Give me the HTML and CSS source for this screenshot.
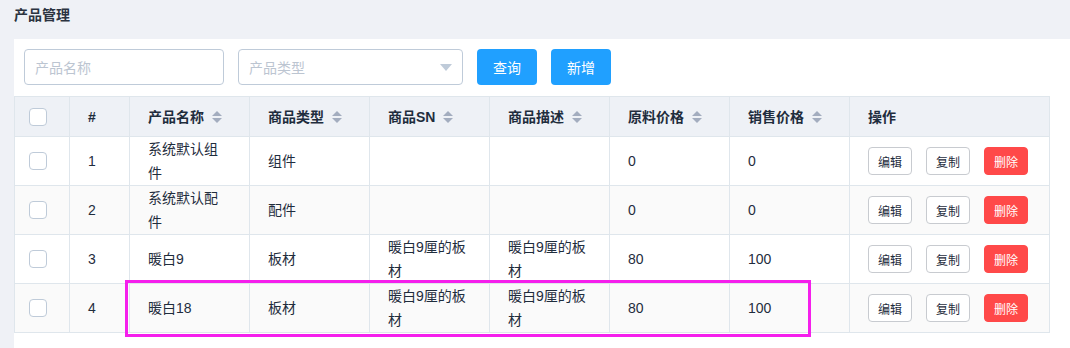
FILE: index.html
```html
<!DOCTYPE html>
<html lang="zh">
<head>
<meta charset="utf-8">
<title>产品管理</title>
<link rel="stylesheet" href="styles.css">
</head>
<body>
<div class="title">产品管理</div>
<div class="card">
  <div class="toolbar">
    <div class="input"><span class="ph">产品名称</span></div>
    <div class="input select"><span class="ph">产品类型</span><span class="caret"></span></div>
    <button class="btn-primary">查询</button>
    <button class="btn-primary">新增</button>
  </div>
  <div class="table">
    <div class="row head">
      <div class="c c-check"><span class="checkbox"></span></div>
      <div class="c">#</div>
      <div class="c">产品名称<span class="sort"><i class="up"></i><i class="down"></i></span></div>
      <div class="c">商品类型<span class="sort"><i class="up"></i><i class="down"></i></span></div>
      <div class="c">商品SN<span class="sort"><i class="up"></i><i class="down"></i></span></div>
      <div class="c">商品描述<span class="sort"><i class="up"></i><i class="down"></i></span></div>
      <div class="c">原料价格<span class="sort"><i class="up"></i><i class="down"></i></span></div>
      <div class="c">销售价格<span class="sort"><i class="up"></i><i class="down"></i></span></div>
      <div class="c">操作</div>
    </div>
    <div class="row">
      <div class="c c-check"><span class="checkbox"></span></div>
      <div class="c">1</div>
      <div class="c">系统默认组件</div>
      <div class="c">组件</div>
      <div class="c"></div>
      <div class="c"></div>
      <div class="c">0</div>
      <div class="c">0</div>
      <div class="c ops"><button class="btn-s">编辑</button><button class="btn-s">复制</button><button class="btn-s danger">删除</button></div>
    </div>
    <div class="row striped">
      <div class="c c-check"><span class="checkbox"></span></div>
      <div class="c">2</div>
      <div class="c">系统默认配件</div>
      <div class="c">配件</div>
      <div class="c"></div>
      <div class="c"></div>
      <div class="c">0</div>
      <div class="c">0</div>
      <div class="c ops"><button class="btn-s">编辑</button><button class="btn-s">复制</button><button class="btn-s danger">删除</button></div>
    </div>
    <div class="row">
      <div class="c c-check"><span class="checkbox"></span></div>
      <div class="c">3</div>
      <div class="c">暖白9</div>
      <div class="c">板材</div>
      <div class="c">暖白9厘的板材</div>
      <div class="c">暖白9厘的板材</div>
      <div class="c">80</div>
      <div class="c">100</div>
      <div class="c ops"><button class="btn-s">编辑</button><button class="btn-s">复制</button><button class="btn-s danger">删除</button></div>
    </div>
    <div class="row striped">
      <div class="c c-check"><span class="checkbox"></span></div>
      <div class="c">4</div>
      <div class="c">暖白18</div>
      <div class="c">板材</div>
      <div class="c">暖白9厘的板材</div>
      <div class="c">暖白9厘的板材</div>
      <div class="c">80</div>
      <div class="c">100</div>
      <div class="c ops"><button class="btn-s">编辑</button><button class="btn-s">复制</button><button class="btn-s danger">删除</button></div>
    </div>
    <div class="highlight"></div>
  </div>
</div>
</body>
</html>
```
FILE: styles.css
```css
* { box-sizing: border-box; }
html, body {
  margin: 0;
  padding: 0;
  background: #eff1f6;
  font-family: "Liberation Sans", "Noto Sans CJK SC", sans-serif;
  color: #1f2d3d;
  font-size: 14px;
}
.title {
  height: 39px;
  line-height: 30px;
  padding-left: 14px;
  font-weight: bold;
  font-size: 14px;
  color: #2b3340;
}
.card {
  margin-left: 14px;
  background: #fff;
  min-height: 309px;
}
.toolbar {
  display: flex;
  gap: 14px;
  padding: 10px 10px 11px;
}
.input {
  width: 200px;
  height: 36px;
  border: 1px solid #bfcbd9;
  border-radius: 4px;
  padding: 0 10px;
  display: flex;
  align-items: center;
  justify-content: space-between;
  background: #fff;
}
.select { width: 225px; padding-right: 10px; }
.ph { color: #bcc5d1; font-size: 14px; }
.caret {
  width: 0;
  height: 0;
  border-left: 6px solid transparent;
  border-right: 6px solid transparent;
  border-top: 7px solid #bfcbd9;
}
.btn-primary {
  width: 60px;
  height: 36px;
  border: 0;
  border-radius: 4px;
  background: #20a0ff;
  color: #fff;
  font-family: inherit;
  font-size: 14px;
  padding: 0;
}
.table {
  position: relative;
  width: 1036px;
  border-left: 1px solid #dfe6ec;
  border-top: 1px solid #dfe6ec;
}
.row {
  display: grid;
  grid-template-columns: 55px 60px 120px 120px 120px 120px 120px 120px 200px;
  height: 49px;
  background: #fff;
}
.row.head { height: 40px; background: #eef1f6; font-weight: bold; }
.row.striped { background: #fafafa; }
.c {
  display: flex;
  align-items: center;
  padding: 0 20px 0 18px;
  border-right: 1px solid #dfe6ec;
  border-bottom: 1px solid #dfe6ec;
  line-height: 24px;
  word-break: break-all;
}
.c-check { padding-left: 14px; }
.checkbox {
  display: block;
  width: 18px;
  height: 18px;
  border: 1px solid #bfcbd9;
  border-radius: 4px;
  background: #fff;
}
.sort {
  display: inline-flex;
  flex-direction: column;
  gap: 2px;
  margin-left: 8px;
}
.sort i {
  display: block;
  width: 0;
  height: 0;
  border-left: 5px solid transparent;
  border-right: 5px solid transparent;
}
.sort .up { border-bottom: 5px solid #a3adbf; }
.sort .down { border-top: 5px solid #a3adbf; }
.ops { gap: 14px; }
.btn-s {
  width: 44px;
  height: 28px;
  border: 1px solid #c8cbd0;
  border-radius: 4px;
  background: #fff;
  color: #1f2d3d;
  font-family: inherit;
  font-size: 12px;
  padding: 0;
}
.btn-s.danger {
  background: #ff4949;
  border-color: #ff4949;
  color: #fff;
}
.highlight {
  position: absolute;
  left: 110px;
  top: 183px;
  width: 686px;
  height: 57px;
  border: 3px solid #f51fec;
  pointer-events: none;
}
```
